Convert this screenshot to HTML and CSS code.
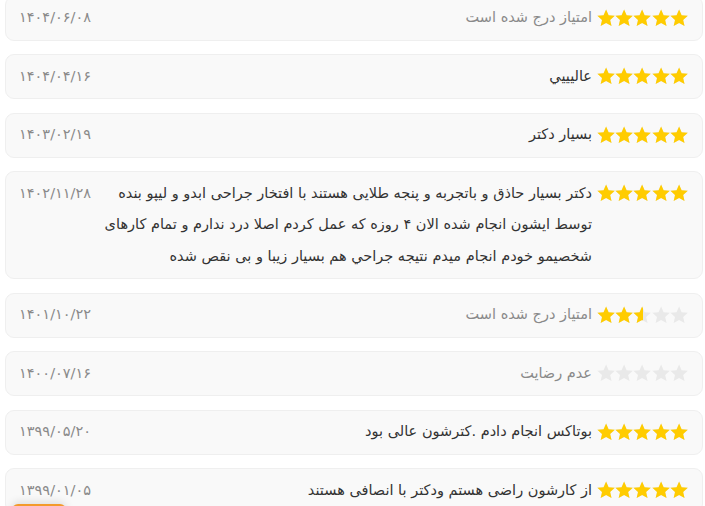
FILE: index.html
```html
<!DOCTYPE html>
<html lang="fa" dir="rtl">
<head>
  <meta charset="UTF-8" />
  <meta name="viewport" content="width=device-width, initial-scale=1.0"/>
  <title>نظرات کاربران</title>
  <link rel="stylesheet" href="styles.css">
</head>
<body>
  <div class="reviews">
    <div class="review">
      <div class="stars"><span class="stars-base"></span><span class="stars-fill" style="width:100%"></span></div>
      <div class="review-text muted">امتیاز درج شده است</div>
      <div class="review-date">۱۴۰۴/۰۶/۰۸</div>
    </div>
    <div class="review">
      <div class="stars"><span class="stars-base"></span><span class="stars-fill" style="width:100%"></span></div>
      <div class="review-text">عاليييي</div>
      <div class="review-date">۱۴۰۴/۰۴/۱۶</div>
    </div>
    <div class="review">
      <div class="stars"><span class="stars-base"></span><span class="stars-fill" style="width:100%"></span></div>
      <div class="review-text">بسيار دكتر</div>
      <div class="review-date">۱۴۰۳/۰۲/۱۹</div>
    </div>
    <div class="review">
      <div class="stars"><span class="stars-base"></span><span class="stars-fill" style="width:100%"></span></div>
      <div class="review-text">دکتر بسیار حاذق و باتجربه و پنجه طلایی هستند با افتخار جراحی ابدو و لیپو بنده توسط ایشون انجام شده الان ۴ روزه که عمل کردم اصلا درد ندارم و تمام کارهای شخصیمو خودم انجام میدم نتیجه جراحي هم بسیار زیبا و بی نقص شده</div>
      <div class="review-date">۱۴۰۲/۱۱/۲۸</div>
    </div>
    <div class="review">
      <div class="stars"><span class="stars-base"></span><span class="stars-fill" style="width:50%"></span></div>
      <div class="review-text muted">امتیاز درج شده است</div>
      <div class="review-date">۱۴۰۱/۱۰/۲۲</div>
    </div>
    <div class="review">
      <div class="stars"><span class="stars-base"></span><span class="stars-fill" style="width:0%"></span></div>
      <div class="review-text muted">عدم رضایت</div>
      <div class="review-date">۱۴۰۰/۰۷/۱۶</div>
    </div>
    <div class="review">
      <div class="stars"><span class="stars-base"></span><span class="stars-fill" style="width:100%"></span></div>
      <div class="review-text">بوتاکس انجام دادم .کترشون عالی بود</div>
      <div class="review-date">۱۳۹۹/۰۵/۲۰</div>
    </div>
    <div class="review">
      <div class="stars"><span class="stars-base"></span><span class="stars-fill" style="width:100%"></span></div>
      <div class="review-text">از کارشون راضی هستم ودکتر با انصافی هستند</div>
      <div class="review-date">۱۳۹۹/۰۱/۰۵</div>
    </div>
  </div>

  <a href="#" class="float-btn"></a>

  <svg width="0" height="0" style="position:absolute">
    <defs>
      <symbol id="star" viewBox="2 2 20 20">
        <path d="M12 2.6l2.8 6.2 6.8.7-5.1 4.6 1.5 6.7L12 17.3l-6 3.5 1.5-6.7-5.1-4.6 6.8-.7z"/>
      </symbol>
    </defs>
  </svg>
  <script>
    // fill every rating with five star icons
    document.querySelectorAll(".stars-base, .stars-fill").forEach(el => {
      let html = "";
      for (let i = 0; i < 5; i++) {
        html += '<svg class="star"><use href="#star"/></svg>';
      }
      el.innerHTML = html;
    });
  </script>
</body>
</html>
```

FILE: styles.css
```css
body {
  margin: 0;
  background-color: #ffffff;
  font-family: "DejaVu Sans", sans-serif;
  color: #333;
  overflow: hidden;
}
.reviews {
  display: flex;
  flex-direction: column;
  gap: 13.5px;
  margin-top: -4.5px;
  padding: 0 2px 0 5px;
}
.review {
  display: flex;
  align-items: flex-start;
  background-color: #f9f9f9;
  border: 1px solid #efefef;
  border-radius: 9px;
  padding: 5.75px 14px 5.75px 13px;
  line-height: 31.5px;
  font-size: 14.5px;
}
.stars {
  position: relative;
  direction: ltr;
  flex: none;
  width: 91px;
  height: 31.5px;
  margin-left: 5px;
}
.stars-base,
.stars-fill {
  display: flex;
  height: 31.5px;
  align-items: center;
  white-space: nowrap;
}
.stars-base {
  color: #e9e9e9;
}
.stars-fill {
  position: absolute;
  top: 0;
  left: 0;
  overflow: hidden;
  color: #ffcc00;
}
.star {
  flex: none;
  width: 18.2px;
  height: 18.2px;
  fill: currentColor;
}
.review-text {
  flex: 1;
  padding-left: 4px;
}
.review-text.muted {
  color: #8a8a8a;
}
.review-date {
  flex: none;
  width: 75px;
  color: #8a8a8a;
  font-size: 14.5px;
  text-align: left;
}
.float-btn {
  position: fixed;
  left: 12px;
  top: 504px;
  width: 54px;
  height: 32px;
  border-radius: 6px;
  background-color: #f39a2b;
  box-shadow: 0 -2px 8px rgba(0, 0, 0, 0.12);
}
```
